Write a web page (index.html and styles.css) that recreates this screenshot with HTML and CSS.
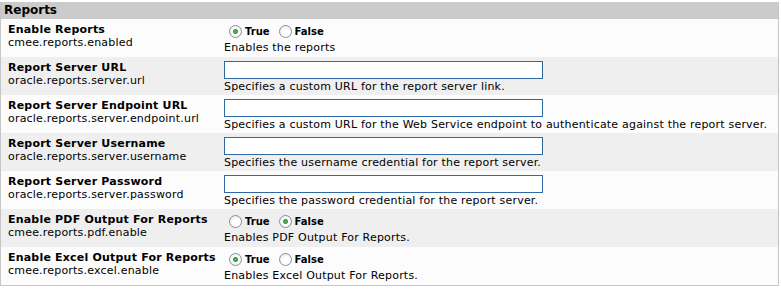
FILE: index.html
```html
<!DOCTYPE html>
<html lang="en">
<head>
    <meta charset="UTF-8">
    <title>Reports</title>
    <link rel="stylesheet" href="styles.css">
</head>
<body>
    <div class="panel">
        <div class="panel-title">Reports</div>

        <div class="row">
            <div class="label">
                <div class="name">Enable Reports</div>
                <div class="key">cmee.reports.enabled</div>
            </div>
            <div class="value">
                <div class="choices">
                    <label><input type="radio" name="enabled" checked> True</label>
                    <label><input type="radio" name="enabled"> False</label>
                </div>
                <div class="help">Enables the reports</div>
            </div>
        </div>

        <div class="row alt">
            <div class="label">
                <div class="name">Report Server URL</div>
                <div class="key">oracle.reports.server.url</div>
            </div>
            <div class="value">
                <input type="text" class="field">
                <div class="help">Specifies a custom URL for the report server link.</div>
            </div>
        </div>

        <div class="row">
            <div class="label">
                <div class="name">Report Server Endpoint URL</div>
                <div class="key">oracle.reports.server.endpoint.url</div>
            </div>
            <div class="value">
                <input type="text" class="field">
                <div class="help">Specifies a custom URL for the Web Service endpoint to authenticate against the report server.</div>
            </div>
        </div>

        <div class="row alt">
            <div class="label">
                <div class="name">Report Server Username</div>
                <div class="key">oracle.reports.server.username</div>
            </div>
            <div class="value">
                <input type="text" class="field">
                <div class="help">Specifies the username credential for the report server.</div>
            </div>
        </div>

        <div class="row">
            <div class="label">
                <div class="name">Report Server Password</div>
                <div class="key">oracle.reports.server.password</div>
            </div>
            <div class="value">
                <input type="text" class="field">
                <div class="help">Specifies the password credential for the report server.</div>
            </div>
        </div>

        <div class="row alt">
            <div class="label">
                <div class="name">Enable PDF Output For Reports</div>
                <div class="key">cmee.reports.pdf.enable</div>
            </div>
            <div class="value">
                <div class="choices">
                    <label><input type="radio" name="pdf"> True</label>
                    <label><input type="radio" name="pdf" checked> False</label>
                </div>
                <div class="help">Enables PDF Output For Reports.</div>
            </div>
        </div>

        <div class="row">
            <div class="label">
                <div class="name">Enable Excel Output For Reports</div>
                <div class="key">cmee.reports.excel.enable</div>
            </div>
            <div class="value">
                <div class="choices">
                    <label><input type="radio" name="excel" checked> True</label>
                    <label><input type="radio" name="excel"> False</label>
                </div>
                <div class="help">Enables Excel Output For Reports.</div>
            </div>
        </div>
    </div>
</body>
</html>
```

FILE: styles.css
```css
body {
    margin: 0;
    padding-top: 2px;
    font-family: "DejaVu Sans", Verdana, sans-serif;
    font-size: 11px;
    letter-spacing: 0.2px;
    color: #000;
    background: #fff;
}
.panel {
    width: 777px;
    border: 1px solid #c6c6c6;
    border-top: none;
}
.panel-title {
    background-color: #cbcbcb;
    font-weight: bold;
    font-size: 12px;
    letter-spacing: 0;
    line-height: 17px;
    padding-left: 3px;
}
.row {
    display: grid;
    grid-template-columns: 223px 1fr;
    height: 38px;
    background-color: #fcfcfc;
}
.row.alt {
    background-color: #efefef;
}
.label {
    padding: 4px 0 0 7px;
    line-height: 13px;
}
.name {
    font-weight: bold;
}
.value {
    padding-top: 4px;
    line-height: 13px;
}
.choices {
    display: flex;
    gap: 4px;
    height: 17px;
    align-items: center;
    font-weight: bold;
    font-size: 10px;
    letter-spacing: 0;
}
.choices label {
    display: flex;
    align-items: center;
}
.choices input {
    appearance: none;
    width: 13px;
    height: 13px;
    margin: 0 3px 0 5px;
    border: 1px solid #8a8f99;
    border-radius: 50%;
    background: radial-gradient(circle at 60% 65%, #fff 40%, #dcdde0 100%);
}
.choices input:checked {
    background: radial-gradient(circle, #56c45a 0, #2f9a35 2px, #ffffff 3px, #e4e5e8 100%);
}
.field {
    display: block;
    box-sizing: border-box;
    width: 319px;
    height: 18px;
    margin: 0;
    border: 1px solid #2d6aa3;
    background: #fff;
    font: inherit;
}
.help {
    margin-top: 1px;
}
```
